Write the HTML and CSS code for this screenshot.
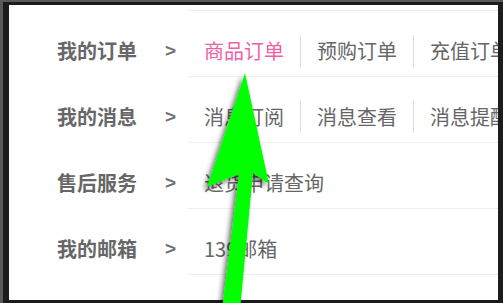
FILE: index.html
```html
<!DOCTYPE html>
<html lang="zh">
<head>
<meta charset="utf-8">
<link rel="stylesheet" href="styles.css">
</head>
<body>
<div class="bezel">
  <div class="screen">
    <div class="list">
      <div class="row">
        <div class="label">我的订单</div>
        <div class="chev">&gt;</div>
        <div class="opts">
          <span class="opt active">商品订单</span>
          <span class="opt">预购订单</span>
          <span class="opt">充值订单</span>
        </div>
      </div>
      <div class="row">
        <div class="label">我的消息</div>
        <div class="chev">&gt;</div>
        <div class="opts">
          <span class="opt">消息订阅</span>
          <span class="opt">消息查看</span>
          <span class="opt">消息提醒</span>
        </div>
      </div>
      <div class="row">
        <div class="label">售后服务</div>
        <div class="chev">&gt;</div>
        <div class="opts">
          <span class="opt">退货申请查询</span>
        </div>
      </div>
      <div class="row last">
        <div class="label">我的邮箱</div>
        <div class="chev">&gt;</div>
        <div class="opts">
          <span class="opt">139邮箱</span>
        </div>
      </div>
    </div>
  </div>
  <svg class="arrow" width="503" height="303" viewBox="0 0 503 303">
    <defs>
      <filter id="sh" x="-20%" y="-20%" width="140%" height="140%">
        <feDropShadow dx="-3" dy="3" stdDeviation="2.5" flood-color="#000" flood-opacity="0.55"/>
      </filter>
    </defs>
    <polygon points="245,73 269,184 253,173 240,310 222,310 239,174 207,187" fill="#00ff00" filter="url(#sh)"/>
  </svg>
</div>
</body>
</html>
```

FILE: styles.css
```css
html, body {
  margin: 0;
  padding: 0;
  background: #3c3c3c;
}

.bezel {
  position: relative;
  width: 503px;
  height: 303px;
  box-sizing: border-box;
  background: #5a5a5a;
  padding: 2px 0 0 3px;
  overflow: hidden;
}

.screen {
  width: 500px;
  height: 301px;
  box-sizing: border-box;
  background: #fff;
  border-style: solid;
  border-color: #1c1c1c;
  border-width: 3px 5px 3px 6px;
  overflow: hidden;
  font-family: "Noto Sans CJK SC", "Noto Sans", sans-serif;
  font-size: 20px;
  color: #666;
}

.list {
  padding-top: 5px;
}

.row {
  display: flex;
}

.label {
  width: 80px;
  margin-left: 48px;
  padding-top: 25px;
  line-height: 32px;
  font-weight: bold;
  color: #676767;
  white-space: nowrap;
}

.chev {
  width: 51px;
  box-sizing: border-box;
  padding-left: 28px;
  padding-top: 25px;
  line-height: 32px;
  font-family: "Liberation Sans", sans-serif;
  font-weight: bold;
  font-size: 19px;
  color: #707070;
}

.opts {
  flex: 1;
  display: flex;
  border-top: 1px solid #eeeeee;
  padding: 24px 0 9px;
  white-space: nowrap;
  overflow: hidden;
}

.row.last .opts {
  border-bottom: 1px solid #eeeeee;
}

.opt {
  height: 32px;
  line-height: 32px;
  padding: 0 16px;
  color: #666;
}

.opt + .opt {
  border-left: 1px solid #dddddd;
}

.opt.active {
  color: #ef5fa7;
}

.arrow {
  position: absolute;
  left: 0;
  top: 0;
}
```
